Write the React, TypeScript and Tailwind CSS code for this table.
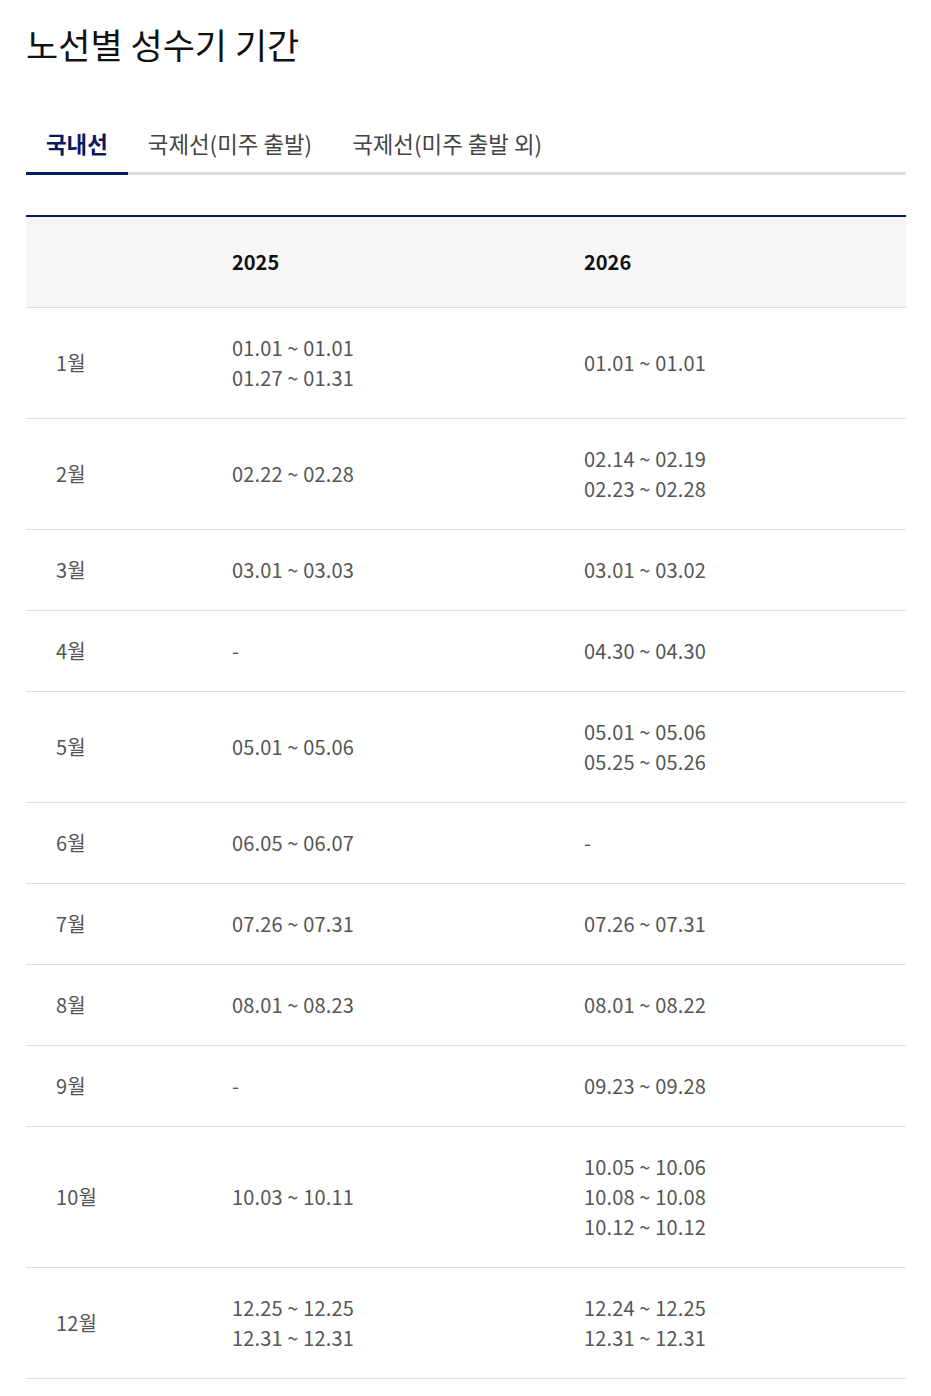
import React from "react";

interface Row {
  month: string;
  y2025: string[];
  y2026: string[];
}

const rows: Row[] = [
  { month: "1월", y2025: ["01.01 ~ 01.01", "01.27 ~ 01.31"], y2026: ["01.01 ~ 01.01"] },
  { month: "2월", y2025: ["02.22 ~ 02.28"], y2026: ["02.14 ~ 02.19", "02.23 ~ 02.28"] },
  { month: "3월", y2025: ["03.01 ~ 03.03"], y2026: ["03.01 ~ 03.02"] },
  { month: "4월", y2025: ["-"], y2026: ["04.30 ~ 04.30"] },
  { month: "5월", y2025: ["05.01 ~ 05.06"], y2026: ["05.01 ~ 05.06", "05.25 ~ 05.26"] },
  { month: "6월", y2025: ["06.05 ~ 06.07"], y2026: ["-"] },
  { month: "7월", y2025: ["07.26 ~ 07.31"], y2026: ["07.26 ~ 07.31"] },
  { month: "8월", y2025: ["08.01 ~ 08.23"], y2026: ["08.01 ~ 08.22"] },
  { month: "9월", y2025: ["-"], y2026: ["09.23 ~ 09.28"] },
  {
    month: "10월",
    y2025: ["10.03 ~ 10.11"],
    y2026: ["10.05 ~ 10.06", "10.08 ~ 10.08", "10.12 ~ 10.12"],
  },
  { month: "12월", y2025: ["12.25 ~ 12.25", "12.31 ~ 12.31"], y2026: ["12.24 ~ 12.25", "12.31 ~ 12.31"] },
];

const tabs = ["국내선", "국제선(미주 출발)", "국제선(미주 출발 외)"];

export default function App() {
  return (
    <div
      className="min-h-[1396px] bg-white pl-[26px] pr-[25px] text-[#555]"
      style={{ fontFamily: '"Noto Sans CJK KR", "Noto Sans", sans-serif' }}
    >
      <h1 className="pt-[20px] text-[35px] leading-[48px] font-normal text-[#111]">노선별 성수기 기간</h1>

      <div className="mt-[59px] flex border-b-[3px] border-[#ddd]">
        {tabs.map((t, i) => (
          <div
            key={t}
            className={
              i === 0
                ? "-mb-[3px] border-b-[3px] border-[#0a1a5e] px-5 pb-[13px] text-[22.4px] leading-[32px] font-bold text-[#0a1a5e]"
                : "px-5 pb-[13px] text-[22.4px] leading-[32px] text-[#444]"
            }
          >
            {t}
          </div>
        ))}
      </div>

      <div className="mt-[40px] border-t-2 border-[#0a1a5e]">
        <div className="grid grid-cols-[1fr_2fr_2fr] border-b border-[#ddd] bg-[#f6f6f6] py-[30px] text-[20px] leading-[30px] font-bold text-[#111]">
          <div />
          <div className="pl-[30px]">2025</div>
          <div className="pl-[30px]">2026</div>
        </div>
        {rows.map((r) => (
          <div
            key={r.month}
            className="grid grid-cols-[1fr_2fr_2fr] items-center border-b border-[#ddd] py-[25px] text-[20px] leading-[30px] tracking-[0.15px]"
          >
            <div className="pl-[30px]">{r.month}</div>
            <div className="pl-[30px]">
              {r.y2025.map((d) => (
                <p key={d}>{d}</p>
              ))}
            </div>
            <div className="pl-[30px]">
              {r.y2026.map((d) => (
                <p key={d}>{d}</p>
              ))}
            </div>
          </div>
        ))}
      </div>
    </div>
  );
}
